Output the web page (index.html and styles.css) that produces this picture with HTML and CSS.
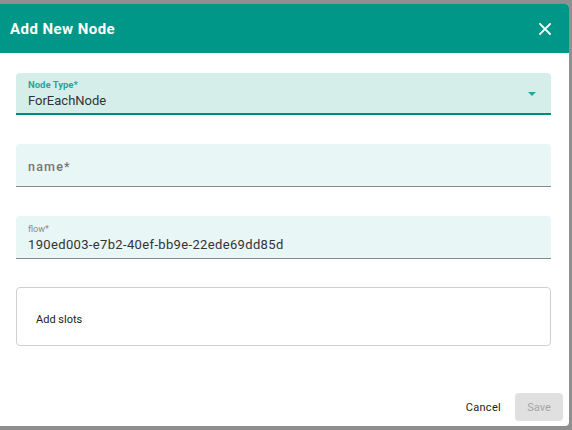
FILE: index.html
```html
<!DOCTYPE html>
<html>
<head>
<meta charset="utf-8">
<link rel="stylesheet" href="styles.css">
</head>
<body>
<div class="dialog">
  <div class="header">
    <span class="title">Add New Node</span>
    <svg class="close" width="12" height="12" viewBox="0 0 12 12"><path d="M1 1L11 11M11 1L1 11" stroke="#fff" stroke-width="1.8" stroke-linecap="square"/></svg>
  </div>
  <div class="content">
    <div class="field select">
      <div class="inner">
        <div class="label teal">Node Type*</div>
        <div class="value">ForEachNode</div>
      </div>
      <svg class="arrow" width="8" height="4" viewBox="0 0 8 4"><path d="M0 0H8L4 4Z" fill="#26a69a"/></svg>
    </div>
    <div class="field plain empty">
      <div class="placeholder">name*</div>
    </div>
    <div class="field plain">
      <div class="inner">
        <div class="label small">flow*</div>
        <div class="value wide">190ed003-e7b2-40ef-bb9e-22ede69dd85d</div>
      </div>
    </div>
    <div class="slots">Add slots</div>
  </div>
  <div class="footer">
    <span class="cancel">Cancel</span>
    <span class="save">Save</span>
  </div>
</div>
</body>
</html>
```
FILE: styles.css
```css
html, body { margin: 0; padding: 0; }
body {
  background: #8f8f8f;
  font-family: Roboto, "Liberation Sans", sans-serif;
  width: 572px;
  height: 430px;
  overflow: hidden;
}
.dialog {
  margin-top: 4px;
  width: 569px;
  height: 422px;
  background: #fff;
  border-radius: 0 4px 4px 0;
  display: flex;
  flex-direction: column;
  overflow: hidden;
}
.header {
  height: 49px;
  background: #009688;
  display: flex;
  align-items: center;
  justify-content: space-between;
  padding: 0 18px 0 10px;
  flex: none;
}
.title {
  color: #fff;
  font-weight: 700;
  font-size: 15px;
  letter-spacing: 0.45px;
}
.content {
  padding: 20px 18px 0 16px;
  display: flex;
  flex-direction: column;
  gap: 29px;
  flex: 1;
}
.field {
  height: 42px;
  box-sizing: border-box;
  border-radius: 4px 4px 0 0;
  display: flex;
  align-items: center;
  padding: 0 12px;
}
.select {
  background: #d5eeea;
  border-bottom: 2px solid #00897b;
  justify-content: space-between;
}
.plain {
  height: 43px;
  background: #e8f6f5;
  border-bottom: 1px solid #8a8a8a;
}
.inner { display: flex; flex-direction: column; }
.label {
  font-size: 9.5px;
  font-weight: 700;
  line-height: 12px;
  margin-top: 2px;
}
.label.teal { color: #26a69a; }
.label.small { color: #8a8a8a; font-weight: 400; font-size: 9px; }
.value {
  font-size: 13px;
  color: #333;
  line-height: 17px;
  margin-top: 1px;
}
.value.wide { letter-spacing: 0.35px; }
.arrow { margin-right: 3px; margin-top: 1px; }
.placeholder {
  font-size: 12.5px;
  color: #757575;
  font-weight: 500;
  letter-spacing: 1.2px;
  margin-top: 2px;
}
.slots {
  height: 59px;
  margin-top: -1px;
  box-sizing: border-box;
  border: 1px solid #cfcfcf;
  border-radius: 4px;
  display: flex;
  align-items: center;
  padding: 6px 19px 0 19px;
  font-size: 11px;
  color: #222;
}
.footer {
  display: flex;
  justify-content: flex-end;
  align-items: center;
  gap: 14px;
  padding: 0 6px 5px 0;
  flex: none;
}
.cancel {
  font-size: 11px;
  font-weight: 400;
  color: #222;
  letter-spacing: 0.3px;
}
.save {
  width: 48px;
  height: 28px;
  background: #e0e0e0;
  border-radius: 4px;
  color: #a6a6a6;
  font-size: 11px;
  font-weight: 400;
  display: flex;
  align-items: center;
  justify-content: center;
}
```
